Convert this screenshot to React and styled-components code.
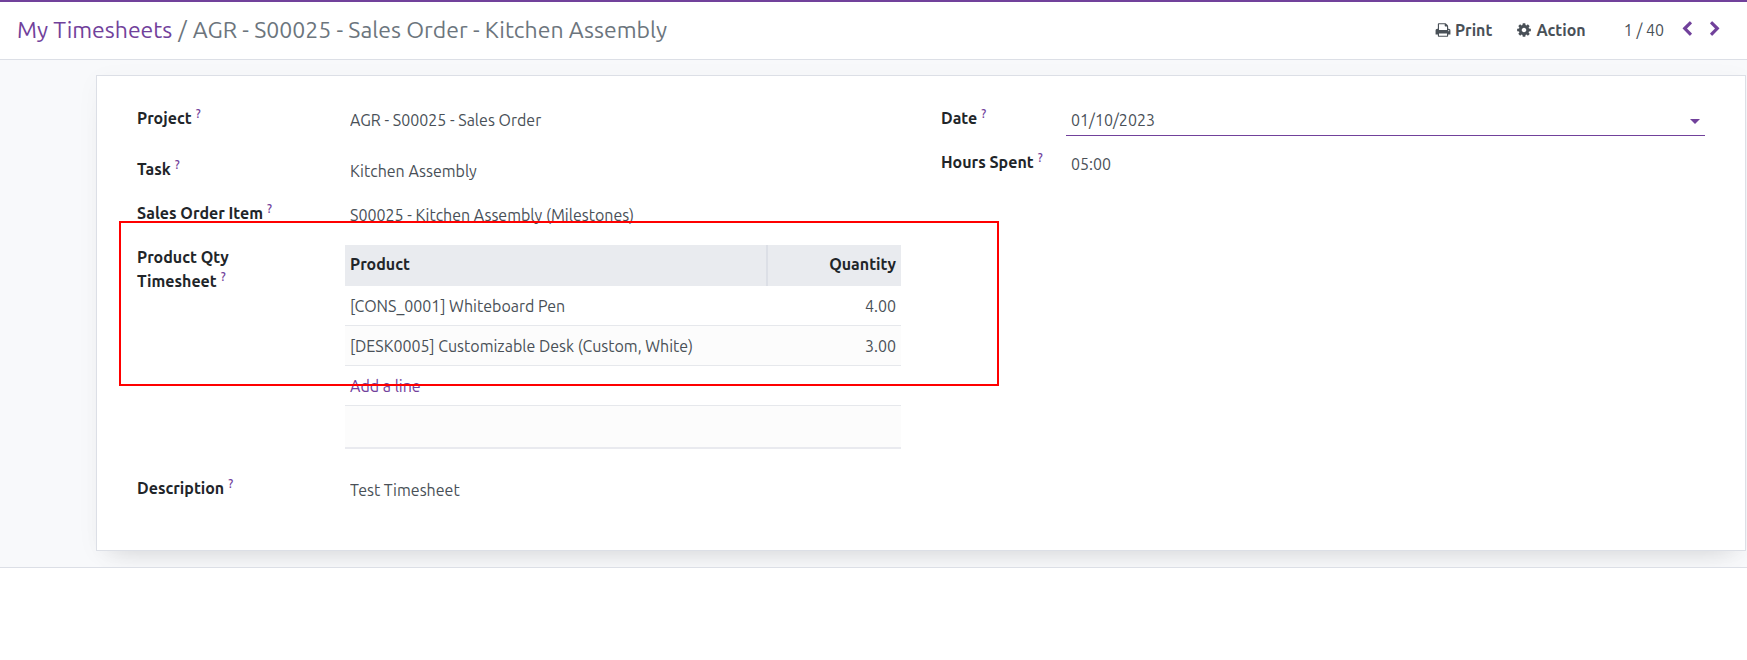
import React from "react";
import styled, { createGlobalStyle } from "styled-components";

const GlobalStyle = createGlobalStyle`
  * { box-sizing: border-box; }
  body {
    margin: 0;
    background: #fff;
    color: #495057;
    font-family: Ubuntu, "Noto Sans", "Open Sans", sans-serif;
    font-size: 16px;
    line-height: 24px;
  }
  input, button { font: inherit; color: inherit; }
`;

const purple = "#71419b";

const ControlPanel = styled.header`
  display: flex;
  align-items: center;
  justify-content: space-between;
  height: 60px;
  padding: 0 24px 2px 17px;
  border-top: 2px solid ${purple};
  border-bottom: 1px solid #dcdfe6;
`;

const Breadcrumb = styled.nav`
  display: flex;
  gap: 6px;
  font-size: 23px;
  line-height: 28px;
  white-space: nowrap;
  color: #6c757d;
`;

const BreadcrumbLink = styled.a`
  color: ${purple};
  text-decoration: none;
`;

const Tools = styled.div`
  display: flex;
  align-items: center;
  gap: 24px;
`;

const ToolButton = styled.button`
  display: flex;
  align-items: center;
  gap: 4px;
  padding: 0;
  border: 0;
  background: none;
  font-weight: 600;
  cursor: pointer;
`;

const Pager = styled.div`
  display: flex;
  align-items: center;
  gap: 12px;
  padding-left: 14px;
`;

const PageCount = styled.span`
  padding-right: 3px;
`;

const PagerButton = styled.button`
  display: flex;
  padding: 0 0 2px;
  border: 0;
  background: none;
  color: ${purple};
  cursor: pointer;
`;

const FormView = styled.main`
  padding: 15px 1px 16px 96px;
  background: #f8f9fb;
  border-bottom: 1px solid #dcdfe6;
  overflow: hidden;
`;

const Sheet = styled.form`
  display: grid;
  grid-template-columns: 1fr 1fr;
  gap: 40px;
  align-items: start;
  padding: 30px 40px 44px;
  background: #fff;
  border: 1px solid #dcdfe6;
  box-shadow: 0 16px 24px -16px rgba(0, 0, 0, 0.14), 0 4px 24px rgba(0, 0, 0, 0.03);
`;

const Group = styled.div`
  position: relative;
  display: flex;
  flex-direction: column;
  gap: 14px;
`;

const FieldRow = styled.div`
  display: grid;
  grid-template-columns: ${(p) => p.$labelWidth}px 1fr;
  align-items: start;
  padding-bottom: ${(p) => (p.$spaced ? 7 : 0)}px;
`;

const Label = styled.label`
  padding-right: 16px;
  color: #212529;
  font-weight: 600;
`;

const Help = styled.sup`
  margin-left: 4px;
  color: ${purple};
  font-size: 12px;
  font-weight: 500;
  line-height: 0;
`;

const InputBox = styled.div`
  display: flex;
  align-items: center;
  height: 30px;
  padding-bottom: 2px;
  border-bottom: 1px solid ${(p) => (p.$active ? purple : "transparent")};
`;

const TextInput = styled.input`
  flex: 1;
  min-width: 0;
  padding: 0 5px;
  border: 0;
  outline: 0;
  background: none;
`;

const CaretButton = styled.button`
  display: flex;
  padding: 4px 5px 0;
  border: 0;
  background: none;
  color: ${purple};
  cursor: pointer;
`;

const Lines = styled.table`
  width: 100%;
  margin-bottom: 13px;
  border-spacing: 0;
  table-layout: fixed;
`;

const HeadCell = styled.th`
  width: ${(p) => (p.$numeric ? "135px" : "auto")};
  height: 41px;
  padding: 0 5px 4px;
  background: #e9ebef;
  border-left: ${(p) => (p.$numeric ? "2px solid #dcdfe6" : "0")};
  color: #212529;
  font-weight: 600;
  text-align: ${(p) => (p.$numeric ? "right" : "left")};
`;

const LineRow = styled.tr`
  background: ${(p) => (p.$striped ? "#fcfcfc" : "#fff")};
`;

const Cell = styled.td`
  height: 40px;
  padding: 0 5px;
  border-bottom: 1px solid #e6e8ec;
  text-align: ${(p) => (p.$numeric ? "right" : "left")};
`;

const FootCell = styled(Cell)`
  height: 43px;
  border-bottom: 2px solid #e9eaef;
`;

const AddLine = styled.a`
  color: ${purple};
  text-decoration: none;
`;

const Highlight = styled.div`
  position: absolute;
  top: 115px;
  left: -18px;
  right: -98px;
  height: 165px;
  border: 2px solid #ff0000;
  pointer-events: none;
`;

const iconPaths = {
  print:
    "M448 1536h896v-256h-896v256zm0-640h896v-384h-160q-40 0-68-28t-28-68v-160h-640v640zm1152 64q0-26-19-45t-45-19-45 19-19 45 19 45 45 19 45-19 19-45zm128 0v416q0 13-9.5 22.5t-22.5 9.5h-224v160q0 40-28 68t-68 28h-960q-40 0-68-28t-28-68v-160h-224q-13 0-22.5-9.5t-9.5-22.5v-416q0-79 56.5-135.5t135.5-56.5h64v-544q0-40 28-68t68-28h672q40 0 88 20t76 48l152 152q28 28 48 76t20 88v256h64q79 0 135.5 56.5t56.5 135.5z",
  cog: "M1152 896q0-106-75-181t-181-75-181 75-75 181 75 181 181 75 181-75 75-181zm512-109v222q0 12-8 23t-20 13l-185 28q-19 54-39 91 35 50 107 138 10 12 10 25t-9 23q-27 37-99 108t-94 71q-12 0-26-9l-138-108q-44 23-91 38-16 136-29 186-7 28-36 28h-222q-14 0-24.5-8.5t-11.5-21.5l-28-184q-49-16-90-37l-141 107q-10 9-25 9-14 0-25-11-126-114-165-168-7-10-7-23 0-12 8-23 15-21 51-66.5t54-70.5q-27-50-41-99l-183-27q-13-2-21-12.5t-8-23.5v-222q0-12 8-23t19-13l186-28q14-46 39-92-40-57-107-138-10-12-10-24 0-10 9-23 26-36 98.5-107.5t94.5-71.5q13 0 26 10l138 107q44-23 91-38 16-136 29-186 7-28 36-28h222q14 0 24.5 8.5t11.5 21.5l28 184q49 16 90 37l142-107q9-9 24-9 13 0 25 10 129 119 165 170 7 8 7 22 0 12-8 23-15 21-51 66.5t-54 70.5q26 50 41 98l183 28q13 2 21 12.5t8 23.5z",
  previous:
    "M1427 301l-531 531 531 531q19 19 19 45t-19 45l-166 166q-19 19-45 19t-45-19l-742-742q-19-19-19-45t19-45l742-742q19-19 45-19t45 19l166 166q19 19 19 45t-19 45z",
  next: "M1363 877l-742 742q-19 19-45 19t-45-19l-166-166q-19-19-19-45t19-45l531-531-531-531q-19-19-19-45t19-45l166-166q19-19 45-19t45 19l742 742q19 19 19 45t-19 45z",
};

function Icon({ name, size = 16 }) {
  return (
    <svg width={size} height={size} viewBox="0 0 1792 1792" fill="currentColor" aria-hidden="true">
      <path d={iconPaths[name]} />
    </svg>
  );
}

function FieldLabel({ id, children }) {
  return (
    <Label htmlFor={id}>
      {children}
      <Help>?</Help>
    </Label>
  );
}

function Field({ id, label, value, labelWidth, spaced, active, children }) {
  return (
    <FieldRow $labelWidth={labelWidth} $spaced={spaced}>
      <FieldLabel id={id}>{label}</FieldLabel>
      <InputBox $active={active}>
        <TextInput id={id} type="text" defaultValue={value} />
        {children}
      </InputBox>
    </FieldRow>
  );
}

const lines = [
  { product: "[CONS_0001] Whiteboard Pen", quantity: "4.00" },
  { product: "[DESK0005] Customizable Desk (Custom, White)", quantity: "3.00" },
];

export default function App() {
  return (
    <>
      <GlobalStyle />
      <ControlPanel>
        <Breadcrumb aria-label="Breadcrumb">
          <BreadcrumbLink href="#timesheets">My Timesheets</BreadcrumbLink>
          <span>/</span>
          <span>AGR - S00025 - Sales Order - Kitchen Assembly</span>
        </Breadcrumb>
        <Tools>
          <ToolButton type="button">
            <Icon name="print" />
            Print
          </ToolButton>
          <ToolButton type="button">
            <Icon name="cog" />
            Action
          </ToolButton>
          <Pager>
            <PageCount>1 / 40</PageCount>
            <PagerButton type="button" aria-label="Previous">
              <Icon name="previous" />
            </PagerButton>
            <PagerButton type="button" aria-label="Next">
              <Icon name="next" />
            </PagerButton>
          </Pager>
        </Tools>
      </ControlPanel>
      <FormView>
        <Sheet>
          <Group>
            <Field id="project" label="Project" value="AGR - S00025 - Sales Order" labelWidth={208} spaced />
            <Field id="task" label="Task" value="Kitchen Assembly" labelWidth={208} />
            <Field
              id="order-item"
              label="Sales Order Item"
              value="S00025 - Kitchen Assembly (Milestones)"
              labelWidth={208}
            />
            <FieldRow $labelWidth={208}>
              <FieldLabel id="add-line">
                Product Qty
                <br />
                Timesheet
              </FieldLabel>
              <Lines>
                <thead>
                  <tr>
                    <HeadCell scope="col">Product</HeadCell>
                    <HeadCell scope="col" $numeric>
                      Quantity
                    </HeadCell>
                  </tr>
                </thead>
                <tbody>
                  {lines.map((line, i) => (
                    <LineRow key={line.product} $striped={i % 2 === 1}>
                      <Cell>{line.product}</Cell>
                      <Cell $numeric>{line.quantity}</Cell>
                    </LineRow>
                  ))}
                  <LineRow>
                    <Cell colSpan={2}>
                      <AddLine id="add-line" href="#add-line">
                        Add a line
                      </AddLine>
                    </Cell>
                  </LineRow>
                  <LineRow $striped>
                    <FootCell colSpan={2} />
                  </LineRow>
                </tbody>
              </Lines>
            </FieldRow>
            <Field id="description" label="Description" value="Test Timesheet" labelWidth={208} />
            <Highlight />
          </Group>
          <Group>
            <Field id="date" label="Date" value="01/10/2023" labelWidth={125} active>
              <CaretButton type="button" aria-label="Open calendar">
                <svg width="10" height="5" viewBox="0 0 10 5" fill="currentColor" aria-hidden="true">
                  <path d="M0 0h10L5 5z" />
                </svg>
              </CaretButton>
            </Field>
            <Field id="hours" label="Hours Spent" value="05:00" labelWidth={125} />
          </Group>
        </Sheet>
      </FormView>
    </>
  );
}
